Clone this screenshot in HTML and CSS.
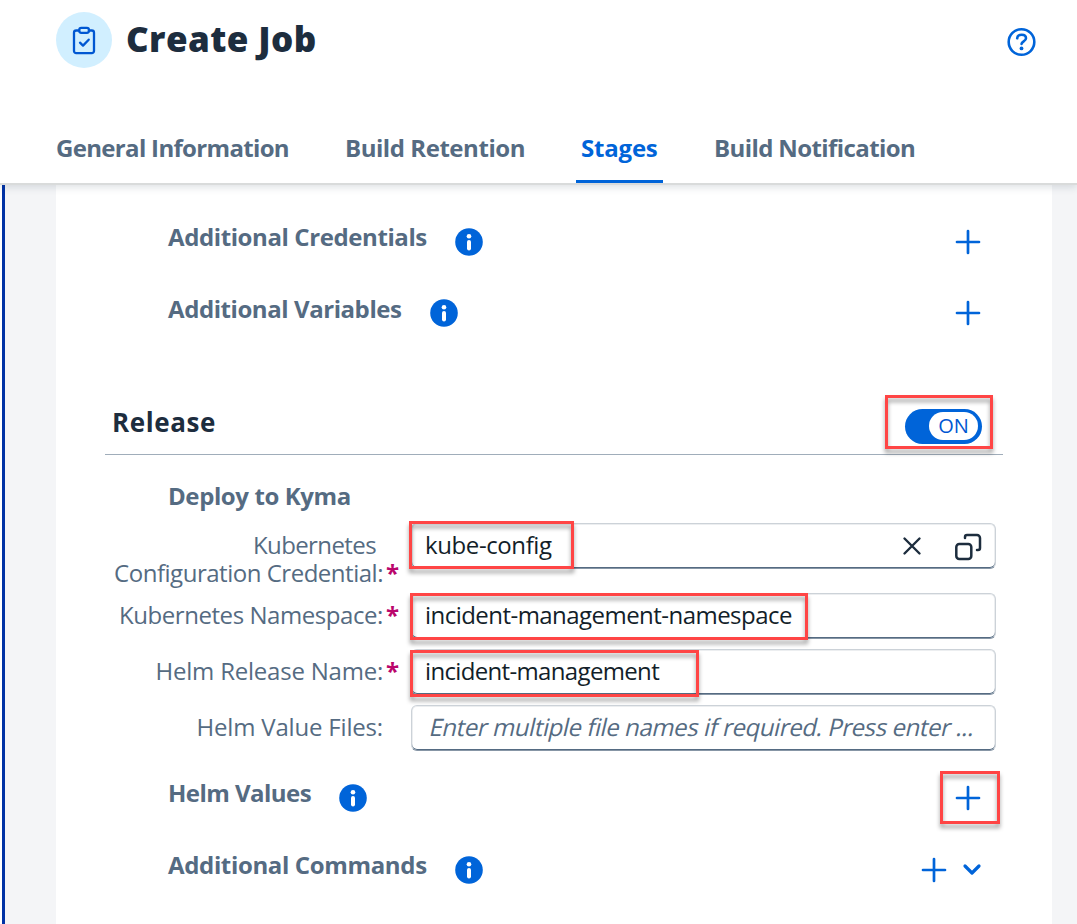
FILE: index.html
```html
<!DOCTYPE html>
<html lang="en">
<head>
<meta charset="utf-8">
<title>Create Job</title>
<link rel="stylesheet" href="styles.css">
</head>
<body>
<svg width="0" height="0" class="defs" aria-hidden="true">
  <symbol id="info" viewBox="0 0 28 28"><circle cx="14" cy="14" r="13.8" fill="#0064d9"/><circle cx="14" cy="8.2" r="2.3" fill="#fff"/><rect x="12" y="12" width="4" height="10.5" rx="2" fill="#fff"/></symbol>
  <symbol id="plus" viewBox="0 0 26 26"><path d="M13 2v22M2 13h22" fill="none" stroke="#0064d9" stroke-width="2.7" stroke-linecap="round"/></symbol>
</svg>
<header class="header">
  <div class="title-row">
    <span class="avatar"><svg width="28" height="32" viewBox="0 0 28 32" fill="none" stroke="#0057d2" stroke-width="2.3" stroke-linejoin="round" stroke-linecap="round"><path d="M9 5.500H6.200A2.200 2.200 0 0 0 4 7.700V26a2.200 2.200 0 0 0 2.200 2.200h15.600A2.200 2.200 0 0 0 24 26V7.700a2.200 2.200 0 0 0-2.200-2.200H19"/><rect x="9.300" y="2.800" width="9.600" height="5" rx="2"/><path d="M10 17.700l3 2.900 5.700-5.900"/></svg></span>
    <h1 class="title">Create Job</h1>
    <svg class="help" width="30" height="30" viewBox="0 0 30 30" fill="none" stroke="#0064d9" stroke-width="2.600" stroke-linecap="round"><circle cx="15" cy="15" r="12.800"/><path d="M10.700 11.300c.2-2.200 2-3.600 4.500-3.600 2.600 0 4.300 1.500 4.300 3.600 0 3.100-4.300 3-4.500 5.700"/><circle cx="15" cy="21.400" r="1.900" fill="#0064d9" stroke="none"/></svg>
  </div>
  <nav class="tabs">
    <a class="tab t-general">General Information</a>
    <a class="tab t-retention">Build Retention</a>
    <a class="tab t-stages active">Stages</a>
    <a class="tab t-notify">Build Notification</a>
  </nav>
</header>
<main class="page">
  <section class="panel">
    <div class="row"><h3 class="w-cred">Additional Credentials</h3><svg class="info"><use href="#info"/></svg><svg class="plus"><use href="#plus"/></svg></div>
    <div class="row"><h3 class="w-vars">Additional Variables</h3><svg class="info up"><use href="#info"/></svg><svg class="plus up"><use href="#plus"/></svg></div>
    <div class="release">
      <h2>Release</h2>
      <div class="switch-wrap"><div class="switch"><span>ON</span></div><i class="mark m-switch"></i></div>
    </div>
    <h3 class="deploy">Deploy to Kyma</h3>
    <div class="form">
      <label><span class="two"><span class="first">Kubernetes</span><span class="l-conf">Configuration Credential:</span></span><b class="low">*</b></label>
      <div class="field"><span class="v-kube">kube-config</span>
        <svg class="clear" width="20" height="20" viewBox="0 0 20 20" fill="none" stroke="#1d2d3e" stroke-width="2.400" stroke-linecap="round"><path d="M2.500 2.500l15 15M17.500 2.500l-15 15"/></svg>
        <svg class="help-val" width="28" height="28" viewBox="0 0 28 28" fill="none" stroke="#1d2d3e" stroke-width="2.500" stroke-linecap="round" stroke-linejoin="round"><rect x="2.300" y="11" width="15" height="15" rx="3"/><path d="M11 5V4a2 2 0 0 1 2-2h10a3 3 0 0 1 3 3v10a2 2 0 0 1-2 2h-1"/></svg>
        <i class="mark m-kube"></i></div>
      <label><span class="l-ns">Kubernetes Namespace:</span><b>*</b></label>
      <div class="field"><span class="v-ns">incident-management-namespace</span><i class="mark m-ns"></i></div>
      <label><span class="l-hrn">Helm Release Name:</span><b>*</b></label>
      <div class="field"><span class="v-im">incident-management</span><i class="mark m-im"></i></div>
      <label><span class="l-hvf">Helm Value Files:</span><b></b></label>
      <div class="field"><span class="placeholder">Enter multiple file names if required. Press enter ...</span></div>
    </div>
    <div class="row"><h3 class="w-hv">Helm Values</h3><svg class="info"><use href="#info"/></svg><span class="plus-wrap"><svg class="plus"><use href="#plus"/></svg><i class="mark m-plus"></i></span></div>
    <div class="row"><h3 class="w-cmd">Additional Commands</h3><svg class="info"><use href="#info"/></svg><svg class="plus with-menu"><use href="#plus"/></svg><svg class="chev" width="20" height="14" viewBox="0 0 20 14" fill="none" stroke="#0064d9" stroke-width="3.200" stroke-linecap="round" stroke-linejoin="round"><path d="M3 3l7 7 7-7"/></svg></div>
  </section>
</main>
</body>
</html>
```
FILE: styles.css
```css
* { box-sizing: border-box; }
html, body { margin: 0; height: 924px; overflow: hidden; }
body { background: #fff; font: 24px/28px "Open Sans", sans-serif; color: #556b82; display: flex; flex-direction: column; white-space: nowrap; }
h1, h2, h3 { margin: 0; }
svg { display: block; flex: none; }
.defs { position: absolute; }
.header { position: relative; z-index: 1; height: 185px; flex: none; background: #fff; border-bottom: 2px solid #d9dbdb; box-shadow: 0 2px 8px rgba(34, 53, 72, .16); display: flex; flex-direction: column; justify-content: space-between; }
.title-row { display: flex; align-items: center; padding: 12px 41px 0 56px; }
.avatar { width: 56px; height: 56px; border-radius: 50%; background: #d1efff; display: flex; align-items: center; justify-content: center; padding-top: 2px; }
.title { margin: 0 0 2px 14px; font-size: 35px; line-height: 44px; font-weight: 800; letter-spacing: .4px; color: #1d2d3e; }
.help { margin: 4px 0 0 auto; transform: translateX(.5px); }
.tabs { display: flex; height: 49px; }
.tab { height: 49px; font-weight: 700; }
.t-general { margin-left: 56px; width: 289px; letter-spacing: -.67px; }
.t-retention { width: 231px; letter-spacing: -.45px; }
.t-stages { width: 87px; padding-left: 5px; margin-right: 51px; letter-spacing: -.2px; }
.t-notify { letter-spacing: -.6px; }
.active { color: #0064d9; border-bottom: 3px solid #0064d9; border-radius: 3px 3px 0 0; }
.page { flex: 1; display: flex; margin-left: 2px; padding: 0 25px 0 51px; border-left: 3px solid #0032a5; background: #f4f5f7; }
.panel { flex: 1; background: #fff; padding: 38px 56px 0 49px; }
.row { display: flex; height: 28px; padding: 0 15px 0 63px; margin-bottom: 44px; }
h3 { font-size: 24px; line-height: 28px; font-weight: 700; letter-spacing: -.4px; }
.w-vars { letter-spacing: -.43px; }
.w-hv { letter-spacing: -.53px; }
.w-cmd { letter-spacing: -.35px; }
.info { width: 28px; height: 28px; margin: 5px 0 0 28px; }
.plus { width: 26px; height: 26px; margin: 6px 0 0 auto; }
.info.up, .plus.up { transform: translateY(-1px); }
.release { display: flex; align-items: flex-start; justify-content: space-between; height: 60px; margin: 72px -7px 27px 0; padding: 11px 21px 0 7px; border-bottom: 1px solid #a0adba; }
h2 { font-size: 26px; line-height: 32px; font-weight: 700; letter-spacing: .6px; color: #1d2d3e; }
.switch-wrap { position: relative; margin-top: 3px; }
.switch { width: 77px; height: 35px; border-radius: 18px; background: #0064d9; padding: 3px 4px 4px 24px; }
.switch span { display: block; height: 28px; border-radius: 14px; background: #fff; color: #0057d2; font-size: 20px; text-align: center; }
.deploy { padding-left: 63px; margin-bottom: 13px; }
.form { display: grid; grid-template-columns: 292px 585px; grid-template-rows: 70px 56px 56px 46px; column-gap: 14px; margin-bottom: 28px; }
label { display: flex; justify-content: flex-end; padding-top: 8px; }
label b { width: 14px; padding-left: 3px; color: #ba066c; }
.two { display: flex; flex-direction: column; align-items: flex-end; }
.first { margin-right: 7px; letter-spacing: -.6px; }
.l-conf { letter-spacing: -.48px; }
.l-ns { letter-spacing: -.43px; }
.l-hrn { letter-spacing: -.22px; }
.l-hvf { letter-spacing: -.18px; }
.low { align-self: flex-start; margin-top: 28px; }
.field { position: relative; display: flex; height: 46px; padding: 7px 13px; color: #131e29; border: 1px solid #ccd2d8; border-bottom-color: #8796a6; border-radius: 6px; box-shadow: inset 0 -1px #556b82, inset 0 0 0 1px #eceef0; }
.v-kube { letter-spacing: -.4px; }
.v-ns { letter-spacing: -.54px; }
.v-im { letter-spacing: -.66px; }
.clear { margin: 5px -1px 0 auto; }
.help-val { margin: 2px 0 0 33px; }
.placeholder { color: #556b82; padding-left: 5px; letter-spacing: -.42px; transform: skewX(-13deg); }
.plus-wrap { position: relative; margin-left: auto; }
.with-menu { margin-right: 13px; }
.chev { margin: 12px -1px 0 0; }
.with-menu + .chev { margin-left: 2px; }
.mark { position: absolute; border: 3px solid #ff4545; filter: drop-shadow(0 4px 2px rgba(0, 0, 0, .38)); }
.m-switch { left: -20px; top: -14px; width: 108px; height: 54px; }
.m-kube { left: -3px; top: -3px; width: 165px; height: 48px; }
.m-ns { left: -2px; top: -1px; width: 398px; height: 47px; }
.m-im { left: -2px; top: 0; width: 289px; height: 47px; }
.m-plus { left: -15px; top: -8px; width: 60px; height: 53px; }
```
